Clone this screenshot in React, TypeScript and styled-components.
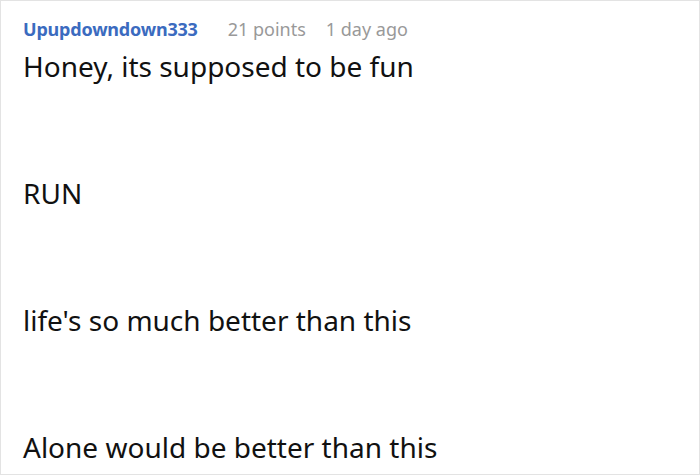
import React from "react";
import styled, { createGlobalStyle } from "styled-components";

const Global = createGlobalStyle`
  html, body { margin: 0; padding: 0; background: #fff; }
  body { font-family: "Noto Sans", "Open Sans", sans-serif; }
`;

const Card = styled.div`
  box-sizing: border-box;
  width: 700px;
  height: 475px;
  border: 1px solid #e3e3e3;
  padding: 16px 22px 0 22px;
  overflow: hidden;
  background: #fff;
`;

const Header = styled.div`
  display: flex;
  align-items: baseline;
  font-size: 18px;
  line-height: 24px;
`;

const Author = styled.span`
  color: #3b6bbf;
  font-weight: 700;
  letter-spacing: -0.2px;
`;

const Meta = styled.span<{ $gap: number }>`
  color: #999;
  margin-left: ${(p) => p.$gap}px;
`;

const Body = styled.div`
  display: flex;
  flex-direction: column;
  gap: 89px;
  margin-top: 6px;
`;

const Line = styled.p`
  margin: 0;
  font-size: 28px;
  line-height: 38px;
  color: #111;
`;

const lines = [
  "Honey, its supposed to be fun",
  "RUN",
  "life's so much better than this",
  "Alone would be better than this",
];

export default function App() {
  return (
    <>
      <Global />
      <Card>
        <Header>
          <Author>Upupdowndown333</Author>
          <Meta $gap={30}>21 points</Meta>
          <Meta $gap={20}>1 day ago</Meta>
        </Header>
        <Body>
          {lines.map((l) => (
            <Line key={l}>{l}</Line>
          ))}
        </Body>
      </Card>
    </>
  );
}
